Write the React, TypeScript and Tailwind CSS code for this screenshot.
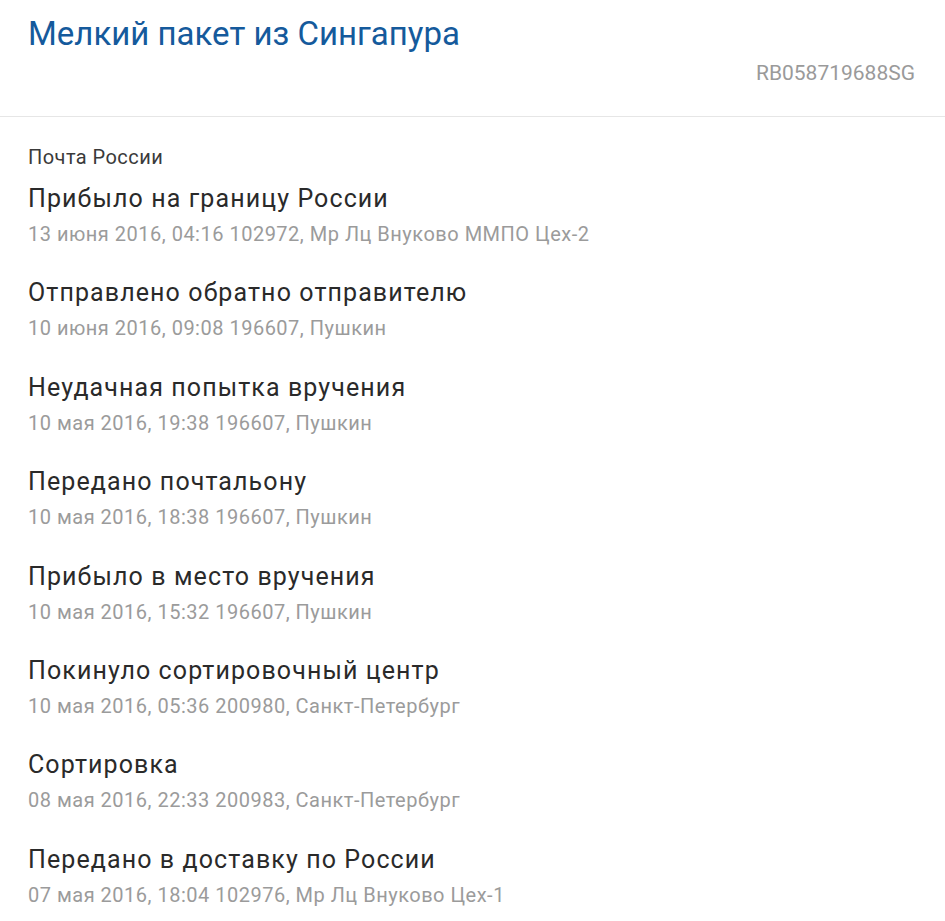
import React from "react";

const events = [
  { title: "Прибыло на границу России", info: "13 июня 2016, 04:16 102972, Мр Лц Внуково ММПО Цех-2" },
  { title: "Отправлено обратно отправителю", info: "10 июня 2016, 09:08 196607, Пушкин" },
  { title: "Неудачная попытка вручения", info: "10 мая 2016, 19:38 196607, Пушкин" },
  { title: "Передано почтальону", info: "10 мая 2016, 18:38 196607, Пушкин" },
  { title: "Прибыло в место вручения", info: "10 мая 2016, 15:32 196607, Пушкин" },
  { title: "Покинуло сортировочный центр", info: "10 мая 2016, 05:36 200980, Санкт-Петербург" },
  { title: "Сортировка", info: "08 мая 2016, 22:33 200983, Санкт-Петербург" },
  { title: "Передано в доставку по России", info: "07 мая 2016, 18:04 102976, Мр Лц Внуково Цех-1" },
];

export default function App() {
  return (
    <div className="min-h-screen bg-white font-['Roboto',sans-serif]">
      {/* шапка с названием и трек-номером */}
      <div className="px-[28px] pt-[14px] pb-[30px] border-b border-[#e6e6e6]">
        <h1 className="text-[33px] leading-[40px] text-[#155a9c]">Мелкий пакет из Сингапура</h1>
        <div className="mt-[6px] pr-[2px] text-right text-[21px] leading-[26px] text-[#9a9a9a]">
          RB058719688SG
        </div>
      </div>

      <div className="px-[28px] pt-[28px]">
        <div className="text-[20px] leading-[24px] tracking-[0.45px] text-[#3a3a3a]">Почта России</div>
        <div className="mt-[15px] flex flex-col gap-[32.4px]">
          {events.map((e) => (
            <div key={e.title}>
              <div className="text-[25px] leading-[30px] tracking-[1.1px] text-[#2a2a2a]">{e.title}</div>
              <div className="mt-[8px] text-[20px] leading-[24px] tracking-[0.5px] text-[#9b9b9b]">{e.info}</div>
            </div>
          ))}
        </div>
      </div>
    </div>
  );
}
